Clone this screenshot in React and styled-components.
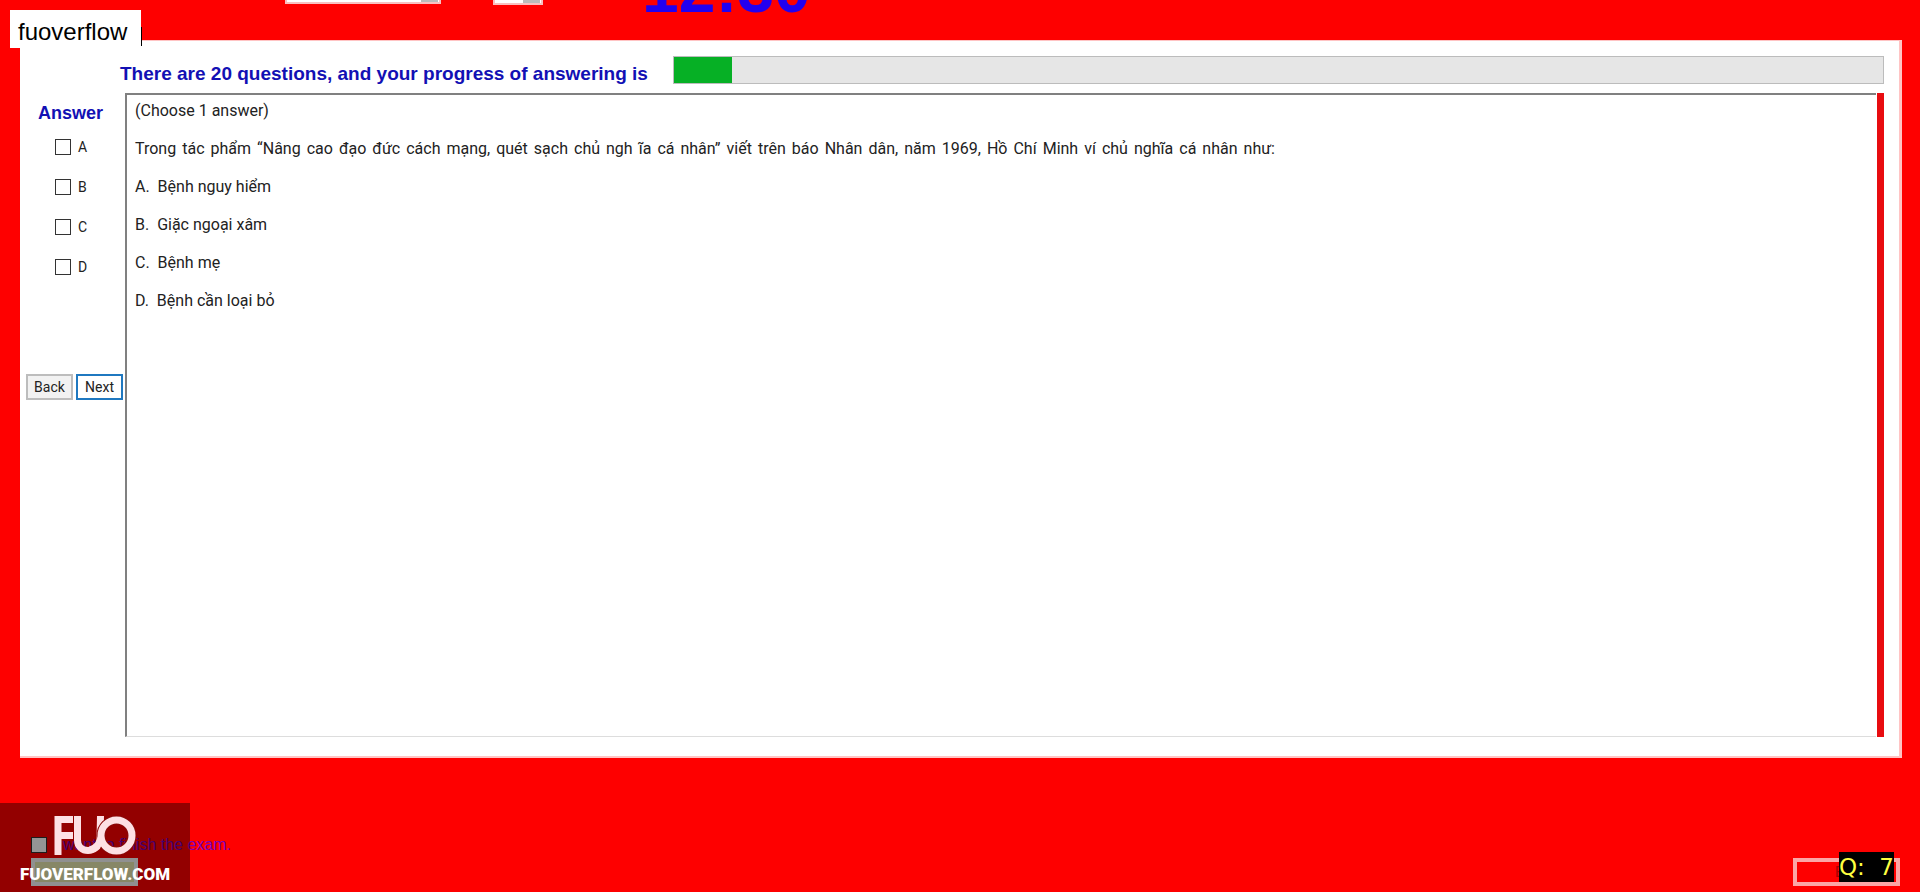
import React from "react";
import styled, { createGlobalStyle } from "styled-components";

const GlobalStyle = createGlobalStyle`
  * { box-sizing: border-box; }
  body { margin: 0; background: #fe0000; }
`;

const Page = styled.div`
  min-height: 100vh;
  display: flex;
  flex-direction: column;
  position: relative;
  overflow: hidden;
  background: #fe0000;
  font-family: Roboto, "Liberation Sans", sans-serif;
  font-size: 16px;
  line-height: 20px;
  color: #222;
`;

const TopBar = styled.header`
  height: 40px;
  flex: none;
  display: flex;
  align-items: flex-start;
  padding-left: 285px;
  overflow: hidden;
`;

const Picker = styled.select`
  appearance: none;
  flex: none;
  width: ${(p) => p.$width}px;
  height: 24px;
  margin: ${(p) => p.$top}px ${(p) => p.$gap}px 0 0;
  border: 2px solid #f8c0c0;
  border-radius: 0;
  background: linear-gradient(#bbb, #bbb) no-repeat right 1px top / 17px 20px #fff;
`;

const Clock = styled.div`
  margin-top: -49px;
  margin-left: 99px;
  font: bold 66px/76px "Liberation Sans", sans-serif;
  color: #2200f0;
`;

const Panel = styled.main`
  flex: none;
  margin: 0 18px 0 20px;
  padding: 15px 15px 19px 6px;
  background: #fff;
  border: solid #ffc4c4;
  border-width: 1px 3px 2px 0;
`;

const ProgressRow = styled.div`
  display: flex;
  align-items: flex-start;
  gap: 20px;
  padding-left: 94px;
`;

const Heading = styled.label`
  flex: none;
  width: 533px;
  padding-top: 8px;
  white-space: nowrap;
  font: bold 19px/20px "Liberation Sans", sans-serif;
  color: #1210b4;
`;

const Track = styled.div`
  flex: 1;
  height: 28px;
  background: #e6e6e6;
  border: 1px solid #bcbcbc;
`;

const Fill = styled.div`
  height: 100%;
  background: #06b025;
`;

const Body = styled.div`
  display: flex;
  margin-top: 9px;
`;

const Side = styled.form`
  flex: none;
  width: 99px;
  padding-top: 10px;
`;

const SideTitle = styled.h2`
  margin: 0 0 14px 12px;
  font: bold 18px/20px "Liberation Sans", sans-serif;
  color: #1210b4;
`;

const Choice = styled.label`
  display: flex;
  align-items: center;
  gap: 7px;
  height: 20px;
  margin: 0 0 20px 29px;
  font-size: 14px;
`;

const Tick = styled.input`
  appearance: none;
  flex: none;
  width: 16px;
  height: 16px;
  margin: 0;
  border: 1px solid #333;
  background: #fff;
`;

const Nav = styled.div`
  display: flex;
  gap: 3px;
  margin-top: 97px;
`;

const NavButton = styled.button`
  width: 47px;
  height: 26px;
  padding: 0;
  font: 14px/20px Roboto, sans-serif;
  color: #222;
  background: ${(p) => (p.$focus ? "#fff" : "#f2f2f2")};
  border: 2px solid ${(p) => (p.$focus ? "#1f78c0" : "#bdbdbd")};
`;

const Question = styled.section`
  flex: 1;
  min-height: 644px;
  padding: 6px 8px;
  border: solid #808080;
  border-width: 2px 0 1px 2px;
  border-bottom-color: #ddd;
`;

const Line = styled.p`
  margin: 0 0 18px;
  white-space: pre-wrap;
`;

const Statement = styled.p`
  max-width: 1140px;
  margin: 0 0 18px;
  text-align: justify;
  text-align-last: justify;
`;

const Rail = styled.div`
  flex: none;
  width: 7px;
  background: #e80c10;
  margin-left: 1px;
`;

const Footer = styled.footer`
  flex: 1;
  display: flex;
  justify-content: space-between;
  align-items: flex-end;
  padding: 0 20px 6px 31px;
`;

const Finish = styled.div`
  display: flex;
  flex-direction: column;
  gap: 3px;
`;

const FinishLabel = styled.label`
  display: flex;
  align-items: center;
  gap: 7px;
  font: 16px/20px "Liberation Sans", sans-serif;
  color: #7800c0;
`;

const FinishButton = styled.button`
  width: 107px;
  height: 28px;
  border: 4px solid #f8f8f8;
  background: #e8e8b0;
`;

const ExitButton = styled.button`
  width: 107px;
  height: 28px;
  padding: 0;
  border: 4px solid #fba6a6;
  background: transparent;
  color: #a80000;
  font: 14px/20px Roboto, sans-serif;
`;

const Tag = styled.div`
  position: absolute;
  left: 10px;
  top: 10px;
  width: 131px;
  height: 38px;
  padding: 8px 8px 0;
  background: #fff;
  color: #000;
  font: 24px/28px "Liberation Sans", sans-serif;

  &::after {
    content: "";
    position: absolute;
    right: -1px;
    top: 17px;
    width: 1px;
    height: 19px;
    background: #000;
  }
`;

const Watermark = styled.div`
  position: absolute;
  left: 0;
  bottom: 0;
  width: 190px;
  height: 89px;
  padding-top: 13px;
  display: flex;
  flex-direction: column;
  align-items: center;
  gap: 7px;
  background: rgba(0, 0, 0, 0.42);
  color: #fff;
  font: 900 17px/24px Roboto, sans-serif;
`;

const Logo = styled.svg`
  flex: none;
  width: 82px;
  height: 39px;
  fill: none;
  stroke: #fde0e4;
  stroke-width: 7;
`;

const Counter = styled.output`
  position: absolute;
  right: 26px;
  bottom: 10px;
  height: 30px;
  white-space: pre;
  background: #000;
  color: #ffff40;
  font: 23px/30px "DejaVu Sans", sans-serif;
`;

const statement =
  "Trong tác phẩm “Nâng cao đạo đức cách mạng, quét sạch chủ ngh ĩa cá nhân” viết trên báo Nhân dân, năm 1969, Hồ Chí Minh ví chủ nghĩa cá nhân như:";

const options = ["A.  Bệnh nguy hiểm", "B.  Giặc ngoại xâm", "C.  Bệnh mẹ", "D.  Bệnh cần loại bỏ"];

export default function App() {
  return (
    <Page>
      <GlobalStyle />
      <TopBar>
        <Picker $width={156} $top={-20} $gap={52} aria-label="Font" />
        <Picker $width={50} $top={-19} $gap={0} aria-label="Size" />
        <Clock>12:30</Clock>
      </TopBar>
      <Panel>
        <ProgressRow>
          <Heading id="progress">There are 20 questions, and your progress of answering is</Heading>
          <Track role="progressbar" aria-labelledby="progress" aria-valuenow={5}>
            <Fill style={{ width: "4.8%" }} />
          </Track>
        </ProgressRow>
        <Body>
          <Side>
            <SideTitle>Answer</SideTitle>
            {["A", "B", "C", "D"].map((c) => (
              <Choice key={c}>
                <Tick type="checkbox" />
                {c}
              </Choice>
            ))}
            <Nav>
              <NavButton type="button">Back</NavButton>
              <NavButton type="button" $focus>Next</NavButton>
            </Nav>
          </Side>
          <Question>
            <Line>(Choose 1 answer)</Line>
            <Statement>{statement}</Statement>
            {options.map((o) => (
              <Line key={o}>{o}</Line>
            ))}
          </Question>
          <Rail />
        </Body>
      </Panel>
      <Footer>
        <Finish>
          <FinishLabel>
            <Tick type="checkbox" />I want to finish the exam.
          </FinishLabel>
          <FinishButton type="button" aria-label="Finish" />
        </Finish>
        <ExitButton type="button">Exit</ExitButton>
      </Footer>
      <Tag>fuoverflow</Tag>
      <Watermark>
        <Logo viewBox="0 0 82 39" aria-hidden="true">
          <path d="M4 39V3.5H19M4 19.5H19" />
          <path d="M23.500 0V24C23.500 38 44 38 46 24L46.500 0" />
          <circle cx="62.500" cy="19.500" r="15.500" stroke="#8a0a0a" strokeWidth="9" />
          <circle cx="62.500" cy="19.500" r="15.500" />
          <path d="M36 34C44 31 46 27 47 21" />
        </Logo>
        FUOVERFLOW.COM
      </Watermark>
      <Counter>Q:  7</Counter>
    </Page>
  );
}
